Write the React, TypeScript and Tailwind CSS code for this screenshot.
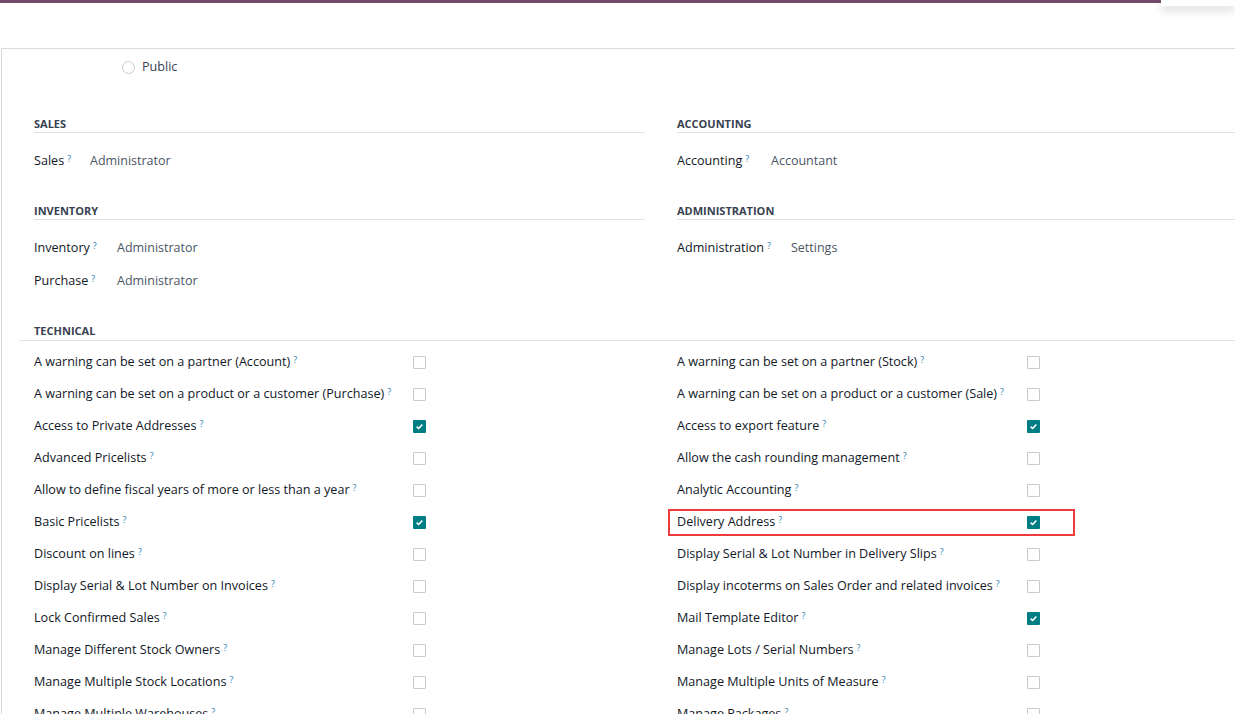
import React from 'react';

const left = [
  { label: 'A warning can be set on a partner (Account)', checked: false },
  { label: 'A warning can be set on a product or a customer (Purchase)', checked: false },
  { label: 'Access to Private Addresses', checked: true },
  { label: 'Advanced Pricelists', checked: false },
  { label: 'Allow to define fiscal years of more or less than a year', checked: false },
  { label: 'Basic Pricelists', checked: true },
  { label: 'Discount on lines', checked: false },
  { label: 'Display Serial & Lot Number on Invoices', checked: false },
  { label: 'Lock Confirmed Sales', checked: false },
  { label: 'Manage Different Stock Owners', checked: false },
  { label: 'Manage Multiple Stock Locations', checked: false },
  { label: 'Manage Multiple Warehouses', checked: false },
];

const right = [
  { label: 'A warning can be set on a partner (Stock)', checked: false },
  { label: 'A warning can be set on a product or a customer (Sale)', checked: false },
  { label: 'Access to export feature', checked: true },
  { label: 'Allow the cash rounding management', checked: false },
  { label: 'Analytic Accounting', checked: false },
  { label: 'Delivery Address', checked: true, marked: true },
  { label: 'Display Serial & Lot Number in Delivery Slips', checked: false },
  { label: 'Display incoterms on Sales Order and related invoices', checked: false },
  { label: 'Mail Template Editor', checked: true },
  { label: 'Manage Lots / Serial Numbers', checked: false },
  { label: 'Manage Multiple Units of Measure', checked: false },
  { label: 'Manage Packages', checked: false },
];

const Help = () => (
  <sup className="ml-[3px] text-[9px] font-normal text-[#2a7fb0] relative -top-[3px]">?</sup>
);

const Checkbox = ({ checked }: { checked: boolean }) =>
  checked ? (
    <span className="flex w-[13px] h-[13px] items-center justify-center rounded-[1px] bg-[#017e84]">
      <svg width="9" height="9" viewBox="0 0 10 10">
        <path d="M1.8 5.2 L4 7.2 L8.2 2.8" fill="none" stroke="white" strokeWidth="1.8" />
      </svg>
    </span>
  ) : (
    <span className="block w-[13px] h-[13px] rounded-[1px] border border-[#c9cbcf] bg-white" />
  );

const Header = ({ title }: { title: string }) => (
  <div className="border-b border-[#dee2e6] pb-[1px] text-[11px] font-bold uppercase text-[#374151] leading-[14px]">
    {title}
  </div>
);

const Field = ({ label, value, labelWidth }: { label: string; value: string; labelWidth: string }) => (
  <div className="flex items-center h-[33px]">
    <div className={`${labelWidth} text-[12.6px] font-medium text-[#111827]`}>
      {label}
      <Help />
    </div>
    <div className="text-[12.5px] text-[#4b5563]">{value}</div>
  </div>
);

const TechCol = ({ items, labelWidth }: { items: typeof right; labelWidth: string }) => (
  <div className="flex flex-col">
    {items.map((it) => (
      <div key={it.label} className="relative flex items-center h-[32px]">
        <div className={`${labelWidth} text-[12.6px] font-medium text-[#111827] whitespace-nowrap`}>
          {it.label}
          <Help />
        </div>
        <Checkbox checked={it.checked} />
        {'marked' in it && it.marked && (
          <div className="absolute left-[-9px] top-[3px] w-[407px] h-[27px] border-2 border-[#ef3b3b]" />
        )}
      </div>
    ))}
  </div>
);

export default function App() {
  return (
    <div className="relative w-[1235px] h-[714px] overflow-hidden bg-white text-[13px] text-[#1f2937] font-['Open_Sans',sans-serif]">
      <div className="h-[3px] w-[1161px] bg-[#714b67]" />
      <div className="absolute right-0 top-0 w-[74px] h-[6px] bg-white shadow-[0_4px_10px_rgba(0,0,0,0.18)]" />
      <div className="h-[45px]" />
      <div className="ml-[1px] w-[1400px] border-t border-l border-[#d8dadd] min-h-[700px]">
        <div className="flex items-center h-[35px] pt-[1px] pl-[120px]">
          <span className="w-[13px] h-[13px] rounded-full border border-[#c9cbcf] bg-white" />
          <span className="ml-[7px] text-[12.6px] font-medium text-[#374151]">Public</span>
        </div>

        <div className="grid grid-cols-[611px_611px] gap-x-[32px] pl-[32px] mt-[33px]">
          <div>
            <Header title="Sales" />
            <div className="mt-[12px]">
              <Field label="Sales" value="Administrator" labelWidth="w-[56px]" />
            </div>
          </div>
          <div>
            <Header title="Accounting" />
            <div className="mt-[12px]">
              <Field label="Accounting" value="Accountant" labelWidth="w-[94px]" />
            </div>
          </div>
          <div className="mt-[26px]">
            <Header title="Inventory" />
            <div className="mt-[12px]">
              <Field label="Inventory" value="Administrator" labelWidth="w-[83px]" />
              <Field label="Purchase" value="Administrator" labelWidth="w-[83px]" />
            </div>
          </div>
          <div className="mt-[26px]">
            <Header title="Administration" />
            <div className="mt-[12px]">
              <Field label="Administration" value="Settings" labelWidth="w-[114px]" />
            </div>
          </div>
        </div>

        <div className="ml-[17px] mt-[26px] border-b border-[#dee2e6] pl-[15px] pb-[2px] text-[11px] font-bold uppercase text-[#374151] leading-[14px]">
          Technical
        </div>
        <div className="grid grid-cols-[611px_611px] gap-x-[32px] pl-[32px] pt-[5px]">
          <TechCol items={left} labelWidth="w-[379px]" />
          <TechCol items={right} labelWidth="w-[350px]" />
        </div>
      </div>
    </div>
  );
}
